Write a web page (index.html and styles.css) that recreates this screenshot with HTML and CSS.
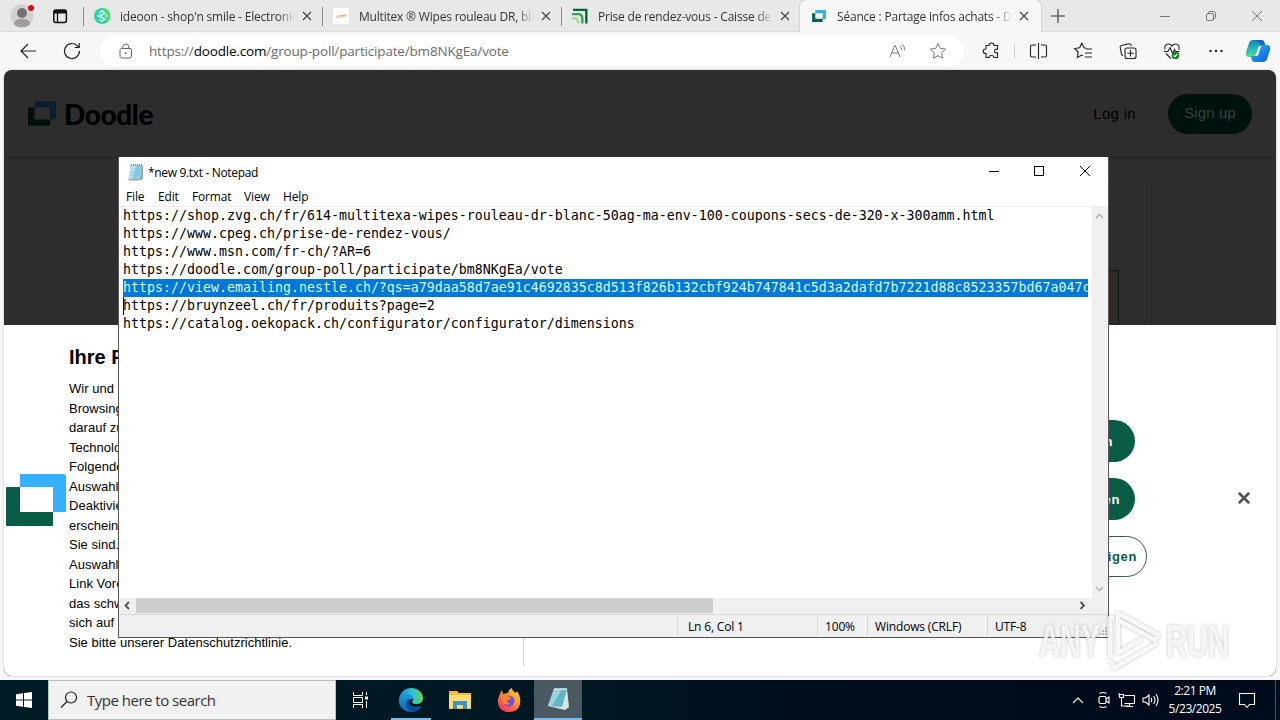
FILE: index.html
```html
<!DOCTYPE html>
<html lang="en">
<head>
  <meta charset="UTF-8">
  <meta name="viewport" content="width=device-width, initial-scale=1.0">
  <title>Desktop</title>
  <link rel="stylesheet" href="styles.css">
</head>
<body>
  <div class="desktop">
    <!-- Browser -->
    <div class="browser">
      <div class="tab-bar">
        <div class="profile">
          <svg width="24" height="28" viewBox="0 0 24 28"><circle cx="12" cy="14" r="11.5" fill="#d3d1d0"/><circle cx="12" cy="11" r="5" fill="#757371"/><ellipse cx="12" cy="21" rx="8" ry="4.3" fill="#a09e9c"/><circle cx="21" cy="6" r="3" fill="#d80c18"/></svg>
        </div>
        <div class="workspaces">
          <svg width="16" height="16" viewBox="0 0 16 16"><rect x="1.8" y="2" width="12.6" height="12.4" rx="2" fill="none" stroke="#111" stroke-width="1.5"/><path d="M2 2h12v3.5H2z" fill="#111"/><path d="M5.5 5v9" stroke="#111" stroke-width="1.3"/></svg>
        </div>
        <div class="tab">
          <svg class="favicon" width="16" height="16" viewBox="0 0 16 16"><circle cx="8" cy="8" r="8" fill="#26d5a4"/><path d="M8 0a8 8 0 0 1 5 14.500z" fill="#4bdc75"/><path d="M8 2.500L11 5.500 5 8l6 3-3 2.500L5 11M5 5.500l3-3M3 8h2M11 8h2.500" fill="none" stroke="#e2fff2" stroke-width="1.500" stroke-linejoin="round"/></svg>
          <span class="tab-title">ideoon - shop'n smile - Electronic</span>
          <svg class="close" width="10" height="10" viewBox="0 0 10 10"><path d="M1 1l8 8M9 1L1 9"/></svg>
        </div>
        <div class="tab">
          <svg class="favicon" width="16" height="16" viewBox="0 0 16 16"><path d="M0 0h16v16H0z" fill="#fffdfa"/><path d="M2 9l3-2 3 1 6-2-1 3-9 1z" fill="#f2cfae"/><path d="M7 8l6-1" stroke="#e8a878"/></svg>
          <span class="tab-title">Multitex ® Wipes rouleau DR, blanc</span>
          <svg class="close" width="10" height="10" viewBox="0 0 10 10"><path d="M1 1l8 8M9 1L1 9"/></svg>
        </div>
        <div class="tab">
          <svg class="favicon" width="16" height="16" viewBox="0 0 17 16"><g fill="none" stroke-width="2.500"><path d="M1 1.500h14.200V16" stroke="#08643f"/><path d="M0 6h6.500q4.500 0 4.500 5v5" stroke="#38a35d"/><path d="M0 10.500h3q3.500 0 3.500 5.500" stroke="#9be08e"/></g></svg>
          <span class="tab-title">Prise de rendez-vous - Caisse de p</span>
          <svg class="close" width="10" height="10" viewBox="0 0 10 10"><path d="M1 1l8 8M9 1L1 9"/></svg>
        </div>
        <div class="tab active">
          <svg class="favicon" width="14" height="12" viewBox="0 0 30 26"><path d="M7 0h23v20h-7V7H7z" fill="#36aee5"/><path d="M0 7h7v12h16v7H0z" fill="#0b6450"/></svg>
          <span class="tab-title">Séance : Partage infos achats - Do</span>
          <svg class="close" width="10" height="10" viewBox="0 0 10 10"><path d="M1 1l8 8M9 1L1 9"/></svg>
        </div>
        <svg class="new-tab" width="14" height="14" viewBox="0 0 14 14"><path d="M7 0v14M0 7h14" stroke="#333" stroke-width="1.1"/></svg>
        <div class="window-buttons">
          <svg width="46" height="32" viewBox="0 0 46 32"><path d="M18 16.500h10"/></svg>
          <svg width="46" height="32" viewBox="0 0 46 32"><rect x="18.500" y="13.500" width="7" height="7" rx="1.500"/><path d="M20.500 13.500v-1q0-1 1-1h4q2 0 2 2v4q0 1-1 1h-1"/></svg>
          <svg width="46" height="32" viewBox="0 0 46 32"><path d="M18 11l10 10M28 11L18 21"/></svg>
        </div>
      </div>

      <div class="toolbar">
        <svg class="nav" width="18" height="18" viewBox="0 0 18 18"><path d="M17 9H2M9 2L2 9l7 7"/></svg>
        <svg class="nav reload" width="18" height="18" viewBox="0 0 18 18"><path d="M16.500 9a7.500 7.500 0 1 1-2.300-5.400L16 5.400M16.200 1v4.500h-4.500"/></svg>
        <div class="address">
          <svg class="lock" width="14" height="16" viewBox="0 0 14 16"><rect x="1" y="5.500" width="11.500" height="9.500" rx="1.500" fill="none" stroke="#666"/><path d="M3.800 5.500V4a3 3 0 0 1 6 0v1.500" fill="none" stroke="#666"/><circle cx="6.800" cy="10.200" r="1" fill="#666"/></svg>
          <span class="url">https://<b>doodle.com</b>/group-poll/participate/bm8NKgEa/vote</span>
          <svg class="read" width="18" height="16" viewBox="0 0 18 16"><path d="M1 14L5.800 2.500h.5L11 14M2.700 10h6.800M11 3q2 1.500 1.500 4M13 1q3.500 3 2.300 6.500" fill="none" stroke="#777"/></svg>
          <svg class="star" width="18" height="18" viewBox="0 0 18 18"><path d="M9 1.500l2.300 4.900 5.200.7-3.800 3.700.9 5.400L9 13.600l-4.600 2.600.9-5.400L1.500 7.100l5.200-.7z" fill="none" stroke="#777"/></svg>
        </div>
        <div class="tools">
          <svg width="46" height="20" viewBox="0 0 46 20"><path d="M18 4.500h3q0-2.500 2.500-2.500T26 4.500h3.500v3.700q-3-.3-3 1.800t3 1.800v4.700H26q0-2-2.500-2T21 16.500h-3v-4q-2.800 0-2.800-2.300T18 8z"/></svg>
          <i></i>
          <svg width="47" height="20" viewBox="0 0 47 20"><path d="M21 4h-4q-1.500 0-1.500 1.500v9q0 1.500 1.500 1.500h4M26 4h4q1.500 0 1.500 1.500v9q0 1.500-1.500 1.500h-4M23.500 2v16"/></svg>
          <svg width="44" height="20" viewBox="0 0 44 20"><path d="M24.500 7.200l-2.500-.5-2.200-4.400-2.200 4.400-5 .8 3.600 3.500-.9 5.500 4.500-2.400 1.200.7M24 8h6M23 12h7M23 16h7"/></svg>
          <svg width="44" height="20" viewBox="0 0 44 20"><rect x="19" y="7" width="11" height="10.500" rx="2"/><path d="M24.500 9v6.500M21.300 12.300h6.500M17 14.500q-1 0-1.500-1.500l-1.300-6.500q-.3-1.500 1.300-2l7.500-1.700q1.500-.3 2 1.200l.3 1"/></svg>
          <svg width="44" height="20" viewBox="0 0 44 20"><path d="M15 8.500q-1-5.500 3.500-5.500 2.500 0 3.500 2 1-2 3.500-2 4.500 0 3.500 6M14 10.500h4l2-4 2.500 6 2-4 1 2h4M16 12.500l5 5"/><circle cx="25.500" cy="14.500" r="3.800" fill="#178126" stroke="none"/><path d="M23.800 14.500l1.200 1.200 2.300-2.500" stroke="#fff"/></svg>
          <svg width="44" height="20" viewBox="0 0 44 20"><g fill="#222" stroke="none"><circle cx="16.500" cy="10" r="1.200"/><circle cx="22" cy="10" r="1.200"/><circle cx="27.500" cy="10" r="1.200"/></g></svg>
        </div>
        <svg class="copilot" width="26" height="24" viewBox="0 0 26 24">
          <defs>
            <linearGradient id="cp1" x2="0" y2="1"><stop stop-color="#1687c5"/><stop offset=".55" stop-color="#27b9bb"/><stop offset="1" stop-color="#60db8b"/></linearGradient>
            <linearGradient id="cp2" x2="1" y2="1"><stop stop-color="#25b7f5"/><stop offset="1" stop-color="#1457df"/></linearGradient>
          </defs>
          <path d="M8 1h8q3 0 3.500 3l.5 3h-4q-2 0-3 3l-1.500 5q-1 3-4 3H4q-4 0-3-5l3-9q1-3 4-3z" fill="url(#cp1)"/>
          <path d="M18 23h-8q-3 0-3.500-3L6 17h4q2 0 3-3l1.500-5q1-3 4-3H22q4 0 3 5l-3 9q-1 3-4 3z" fill="url(#cp2)"/>
          <path d="M15 7h2q-1.500 1-2 3l-1.200 4.500q-.8 2.500-2.800 2.500H9.500q1.500-1 2-3L13 9q.5-2 2-2z" fill="#f5fbff"/>
          <path d="M8 1h8q3 0 3.500 3l.5 2h-4q-2-4-8-5z" fill="#1763cf"/>
        </svg>
      </div>

      <div class="page">
        <div class="page-header">
          <svg class="doodle-mark" width="28" height="25" viewBox="0 0 60 52"><path d="M14 0h46v38H47V13H14z" fill="#0a1e2c"/><path d="M0 13h14v26h33v13H0z" fill="#000f0b"/></svg>
          <span class="wordmark">Doodle</span>
          <span class="login">Log in</span>
          <span class="signup">Sign up</span>
        </div>
        <div class="poll"><div class="poll-slot"></div></div>

        <!-- Cookie consent -->
        <div class="consent">
          <svg class="consent-logo" width="60" height="52" viewBox="0 0 60 52"><path d="M14 0h44q2 0 2 2v36H47V13H14z" fill="#35b1ff"/><path d="M0 14q0-1 1-1h13v25h33v13q0 1-1 1H1q-1 0-1-1z" fill="#095c46"/></svg>
          <div class="consent-text">
            <h2>Ihre P</h2>
            <p>Wir und<br>Browsing<br>darauf zu<br>Technolo<br>Folgende<br>Auswahl<br>Deaktivie<br>erschein<br>Sie sind.<br>Auswahl<br>Link Vore<br>das schw<br>sich auf<br>Sie bitte unserer Datenschutzrichtlinie.</p>
          </div>
          <div class="consent-actions">
            <button class="solid first">Akzeptieren</button>
            <button class="solid">Ablehnen</button>
            <button class="outline">Zwecke anzeigen</button>
          </div>
          <svg class="dismiss" width="14" height="14" viewBox="0 0 14 14"><path d="M2.500 2.500l9 9M11.500 2.500l-9 9" stroke="#505050" stroke-width="2.500" stroke-linecap="round"/></svg>
        </div>
      </div>
    </div>

    <!-- Notepad -->
    <div class="notepad">
      <div class="np-title">
        <svg width="18" height="18" viewBox="0 0 18 18"><path d="M4 2.500h12V16l-3 1.500H1.500z" fill="#9fa9ab"/><path d="M3.500 2h11.500l-1.500 14H1.500z" fill="#8ecce0"/><path d="M3.500 2h6L5 16H1.500z" fill="#b9e4ef"/><path d="M4 6h10M3.700 9H14M3.300 12h10" stroke="#62a7c4" stroke-width=".4"/><path d="M4 2h12" stroke="#68777d" stroke-width="1.500" stroke-dasharray="1 1"/></svg>
        <span>*new 9.txt - Notepad</span>
        <div class="np-buttons">
          <svg width="45" height="30" viewBox="0 0 45 30"><path d="M17 14.500h10"/></svg>
          <svg width="46" height="30" viewBox="0 0 46 30"><rect x="17.500" y="9.500" width="9" height="9"/></svg>
          <svg width="45" height="30" viewBox="0 0 45 30"><path d="M17 9l10 10M27 9L17 19"/></svg>
        </div>
      </div>
      <div class="np-menu"><span class="m1">File</span><span class="m2">Edit</span><span class="m3">Format</span><span class="m4">View</span><span class="m5">Help</span></div>
      <div class="np-body">
        <div class="np-text">
          <div>https://shop.zvg.ch/fr/614-multitexa-wipes-rouleau-dr-blanc-50ag-ma-env-100-coupons-secs-de-320-x-300amm.html</div>
          <div>https://www.cpeg.ch/prise-de-rendez-vous/</div>
          <div>https://www.msn.com/fr-ch/?AR=6</div>
          <div>https://doodle.com/group-poll/participate/bm8NKgEa/vote</div>
          <div class="selected">https://view.emailing.nestle.ch/?qs=a79daa58d7ae91c4692835c8d513f826b132cbf924b747841c5d3a2dafd7b7221d88c8523357bd67a047c</div>
          <div class="caret">https://bruynzeel.ch/fr/produits?page=2</div>
          <div>https://catalog.oekopack.ch/configurator/configurator/dimensions</div>
        </div>
        <div class="v-scroll">
          <svg width="9" height="6" viewBox="0 0 9 6"><path d="M1 5l3.500-3.500L8 5"/></svg>
          <svg width="9" height="6" viewBox="0 0 9 6"><path d="M1 1l3.500 3.500L8 1"/></svg>
        </div>
      </div>
      <div class="h-scroll">
        <svg width="17" height="16" viewBox="0 0 17 16"><path d="M10 4L6.500 7.500 10 11"/></svg>
        <div class="thumb"></div>
        <svg width="17" height="16" viewBox="0 0 17 16"><path d="M5.500 4L9 7.500 5.500 11"/></svg>
      </div>
      <div class="np-status">
        <span class="pos">Ln 6, Col 1</span><span class="zoom">100%</span><span class="eol">Windows (CRLF)</span><span class="enc">UTF-8</span>
        <svg class="grip" width="10" height="10" viewBox="0 0 10 10"><path d="M7 1h2v2H7zM4 4h2v2H4zM7 4h2v2H7zM1 7h2v2H1zM4 7h2v2H4zM7 7h2v2H7z" fill="#bbb"/></svg>
      </div>
    </div>

    <div class="watermark">
      <span>ANY</span>
      <svg width="58" height="64" viewBox="0 0 58 64"><path d="M5 50V10h4M13 31V5l40 22-3 5L13 12M13 25v20l24-14M11 59l41-24M8 53v6l4 1" fill="none" stroke="#fff" stroke-opacity=".85" stroke-width="4.500" stroke-linejoin="round"/></svg>
      <span>RUN</span>
    </div>

    <!-- Taskbar -->
    <div class="taskbar">
      <div class="start"><svg width="16" height="16" viewBox="0 0 16 16"><path d="M0 2.300L7 1.200v6.300H0zM8 1l8-1v7.500H8zM0 8.500h7v6.300l-7-1zM8 8.500h8V16l-8-1.100z" fill="#fff"/></svg></div>
      <div class="search">
        <svg width="18" height="18" viewBox="0 0 18 18"><circle cx="11" cy="6.500" r="5.500" fill="none" stroke="#222" stroke-width="1.200"/><path d="M7 10.500L1 16.500" stroke="#222" stroke-width="1.300"/></svg>
        <span>Type here to search</span>
      </div>
      <div class="task view"><svg width="18" height="18" viewBox="0 0 18 18"><path d="M2.500 1v3.500h9V1M2.500 17v-3.500h9V17M2.500 6.500h9v5h-9zM15.500 1v3M15.500 10v7" fill="none" stroke="#fff"/><path d="M14 5.500h3v3h-3z" fill="#fff"/></svg></div>
      <div class="task edge">
        <svg width="26" height="26" viewBox="0 0 26 26">
          <defs>
            <linearGradient id="eg1" x2="1"><stop stop-color="#1c83d1"/><stop offset=".5" stop-color="#2bbfd8"/><stop offset="1" stop-color="#64d65b"/></linearGradient>
            <linearGradient id="eg2" x2="0" y2="1"><stop stop-color="#1b9bdc"/><stop offset="1" stop-color="#1463b5"/></linearGradient>
          </defs>
          <path d="M1 12C2 5 7 1 13 1c8 0 12 6 12 10 0 5-4 6-7 6-3 0-5-1-3-4 1-2-1-5-5-5-4 0-8 2-9 4z" fill="url(#eg1)"/>
          <path d="M1 12c1-3 5-5 9-5 3 0 6 2 5 5-7 0-6 11 8 7-2 4-6 6-10 6C6 25 0 20 1 12z" fill="url(#eg2)"/>
          <path d="M10 12c-3 4-2 10 4 13 4 0 7-2 9-6-6 4-14 0-11-7z" fill="#0c4d92"/>
        </svg>
      </div>
      <div class="task"><svg width="22" height="20" viewBox="0 0 22 20"><path d="M0 1h8l2 2h12v16H0z" fill="#f6bd35"/><path d="M0 5h22v13H0z" fill="#ffdc70"/><path d="M4 19v-8h14v8h-4v-4H8v4z" fill="#3c91ce"/></svg></div>
      <div class="task">
        <svg width="24" height="25" viewBox="0 0 24 25">
          <defs><linearGradient id="ff" x1="1" x2=".2" y2="1"><stop stop-color="#ffe33d"/><stop offset=".45" stop-color="#ff9827"/><stop offset="1" stop-color="#f12b67"/></linearGradient></defs>
          <path d="M3 6q1-3 2-4 0 3 2 4 2-1 4-1 1-4 4-5 0 3 4 5l1-2c6 9 4 21-8 21C2 24-2 15 3 6z" fill="url(#ff)"/><circle cx="12" cy="13" r="5.500" fill="#7450d8"/><path d="M7 8q4-1 7 2-1 2-4 2 0 3 3 4-5 2-8-3z" fill="#ff8331"/>
        </svg>
      </div>
      <div class="task open"><svg width="24" height="24" viewBox="0 0 24 24"><path d="M8 2h13l2 18-4 3-17-4z" fill="#d8e5e3"/><path d="M8 2h13l-5 18-14-1z" fill="#65b4c3"/><path d="M8 2h8L6 19H2z" fill="#99d3dc"/><path d="M8 2h13" stroke="#d7eef0" stroke-width="1.500"/></svg></div>
      <div class="tray">
        <svg class="up" width="12" height="8" viewBox="0 0 12 8"><path d="M1 7l5-5 5 5"/></svg>
        <svg class="cam" width="14" height="18" viewBox="0 0 14 18"><rect x="2" y="5.500" width="7" height="7" rx="1.500"/><path d="M9 8l3-2v6l-3-2M2.500 2.500q3.500-2 7 0M2.500 15.500q3.500 2 7 0"/></svg>
        <svg class="net" width="18" height="16" viewBox="0 0 18 16"><path d="M6.500 3.500h10v8h-10M1.500 2.500h4v3h-4zM3.500 5.500V14h7M11.500 12v2.500M8 14.500h7M1 2.500V1"/></svg>
        <svg class="vol" width="18" height="14" viewBox="0 0 18 14"><path d="M1 5h2.500L7 2v10L3.500 9H1zM9 4.800q1.500 2.200 0 4.400M11.500 3q3 4 0 8M14 1q4 6 0 12"/></svg>
        <div class="clock"><span>2:21 PM</span><span>5/23/2025</span></div>
        <svg class="note" width="18" height="18" viewBox="0 0 18 18"><path d="M1.500 2.500h15v11h-5l-2.500 3-2.500-3h-5z"/></svg>
        <i></i>
      </div>
    </div>
  </div>
</body>
</html>
```
FILE: styles.css
```css
* {
  box-sizing: border-box;
}

body {
  margin: 0;
  font-family: "Open Sans", "Noto Sans", sans-serif;
  font-size: 12px;
  color: #000;
}

svg {
  display: block;
  flex: none;
}

.desktop {
  position: relative;
  width: 1280px;
  height: 720px;
  overflow: hidden;
  display: flex;
  flex-direction: column;
}

/* Browser */
.browser {
  height: 680px;
  background: #f7f7f7;
}

.tab-bar {
  display: flex;
  height: 32px;
  background: #e8e8e8;
  border-bottom: 1px solid #dcdcdc;
}

.profile {
  padding: 2px 0 0 10px;
  width: 52px;
}

.workspaces {
  padding-top: 8px;
  width: 31px;
}

.tab {
  display: flex;
  flex: none;
  align-items: center;
  width: 239px;
  height: 32px;
  padding-left: 11px;
  background: linear-gradient(#8a8a8a, #8a8a8a) 0 7px / 1px 19px no-repeat;
}

.tab-title {
  width: 175px;
  margin-left: 10px;
  overflow: hidden;
  white-space: nowrap;
  color: #333;
  letter-spacing: -0.2px;
  -webkit-mask-image: linear-gradient(90deg, #000 90%, transparent);
  mask-image: linear-gradient(90deg, #000 90%, transparent);
}

.close {
  margin-left: 7px;
  stroke: #444;
  stroke-width: 1.2;
}

.tab.active {
  width: 241px;
  padding-left: 12px;
  background: #f7f7f7;
  border-radius: 6px 6px 0 0;
  box-shadow: 0 0 2px #aaa;
  clip-path: inset(0 -3px 0 -3px);
}

.active .tab-title {
  margin-left: 11px;
}

.new-tab {
  margin: 9px 0 0 10px;
}

.window-buttons {
  display: flex;
  margin-left: auto;
}

.window-buttons svg {
  fill: none;
  stroke: #777;
}

.toolbar {
  display: flex;
  align-items: center;
  height: 38px;
  padding-left: 19px;
}

.nav {
  fill: none;
  stroke: #222;
  stroke-width: 1.2;
}

.reload {
  margin-left: 26px;
}

.address {
  display: flex;
  align-items: center;
  width: 864px;
  height: 30px;
  margin-left: 19px;
  padding-left: 19px;
  background: #fff;
  border-radius: 15px;
}

.url {
  width: 738px;
  margin-left: 16px;
  font-size: 13.5px;
  letter-spacing: -0.175px;
  color: #6b6b6b;
}

.url b {
  font-weight: 400;
  color: #000;
}

.read {
  margin-left: 2px;
}

.star {
  margin-left: 22px;
}

.tools {
  display: flex;
  align-items: center;
  margin-left: 4px;
}

.tools svg {
  fill: none;
  stroke: #222;
  stroke-width: 1.1;
}

.tools i {
  width: 1px;
  height: 16px;
  background: #d0d0d0;
}

.copilot {
  margin-left: 7px;
}

/* Web page */
.page {
  display: flex;
  flex-direction: column;
  width: 1272px;
  height: 606px;
  margin-left: 4px;
  overflow: hidden;
  background: #2d2d2d;
  border-radius: 8px;
  box-shadow: 0 0 2px #aaa;
}

.page-header {
  display: flex;
  align-items: center;
  height: 88px;
  padding: 0 24px;
  border-bottom: 1px solid #242424;
  font-family: "Liberation Sans", Arial, sans-serif;
}

.wordmark {
  margin-left: 8px;
  font-family: Lato, sans-serif;
  font-size: 28px;
  font-weight: 900;
  letter-spacing: -0.4px;
}

.login {
  margin-left: auto;
  font-size: 15px;
  letter-spacing: 0.3px;
}

.signup {
  width: 84px;
  height: 40px;
  margin-left: 32px;
  border-radius: 20px;
  background: #00120d;
  color: #35433f;
  font-size: 15px;
  line-height: 38px;
  letter-spacing: 0.1px;
  text-align: center;
}

.poll {
  width: 1027px;
  height: 143px;
  margin: 24px 0 0 121px;
  padding: 87px 32px 0;
  border: 1px solid #262626;
  border-bottom: 0;
  flex: none;
}

.poll-slot {
  height: 55px;
  border: 1px solid #111;
  border-bottom: 0;
  border-radius: 3px 3px 0 0;
  background: #302925;
}

.consent {
  display: flex;
  flex: none;
  height: 351px;
  background: #fff;
  font-family: "Liberation Sans", Arial, sans-serif;
}

.consent-logo {
  margin: 149px 0 0 2px;
}

.consent-text {
  width: 458px;
  height: 341px;
  padding: 20px 0 0 3px;
  border-right: 1px solid #d8d8d8;
  white-space: nowrap;
}

.consent-text h2 {
  margin: 0;
  font-size: 20px;
  line-height: 24px;
}

.consent-text p {
  margin: 10px 0 0;
  font-size: 13px;
  line-height: 19.5px;
  letter-spacing: 0.03px;
}

.consent-actions {
  display: flex;
  flex-direction: column;
  width: 623px;
  padding-top: 95px;
}

.consent-actions button {
  width: 200px;
  height: 42px;
  margin: 0 0 16px auto;
  padding: 0 15px 0 0;
  border: 0;
  border-radius: 21px;
  background: #095c46;
  color: #fff;
  font: bold 13px "Liberation Sans", Arial, sans-serif;
  letter-spacing: 0.6px;
  text-align: right;
}

.consent-actions .solid {
  margin-right: 12px;
}

.consent-actions .first {
  padding-right: 22px;
}

.consent-actions .outline {
  height: 41px;
  padding-right: 9px;
  border: 1px solid #315f52;
  background: #fff;
  color: #095c46;
}

.dismiss {
  margin: 166px 0 0 90px;
}

/* Notepad window */
.notepad {
  position: absolute;
  left: 118px;
  top: 157px;
  width: 991px;
  height: 481px;
  border: 1px solid #555;
  border-top: 0;
  background: #fff;
  display: flex;
  flex-direction: column;
}

.np-title {
  display: flex;
  align-items: center;
  height: 30px;
  padding-left: 8px;
}

.np-title span {
  margin-left: 3px;
  letter-spacing: -0.33px;
}

.np-buttons {
  display: flex;
  margin-left: auto;
}

.np-buttons svg {
  fill: none;
  stroke: #000;
}

.np-menu {
  display: flex;
  height: 20px;
  padding-left: 7px;
  border-bottom: 1px solid #eee;
  line-height: 20px;
  letter-spacing: -0.15px;
}

.m1 { width: 32px; }
.m2 { width: 34px; }
.m3 { width: 52px; }
.m4 { width: 39px; }

.np-body {
  display: flex;
  height: 391px;
}

.np-text {
  width: 969px;
  margin-right: 4px;
  padding-left: 4px;
  overflow: hidden;
  white-space: nowrap;
  font-family: "DejaVu Sans Mono", monospace;
  font-size: 13.29px;
  line-height: 18px;
}

.np-text div {
  height: 18px;
}

.np-text .selected {
  overflow: hidden;
  background: #0078d7;
  color: #d7f8ff;
}

.np-text .caret {
  box-shadow: inset 1px 0 #000;
}

.v-scroll {
  display: flex;
  flex: 1;
  flex-direction: column;
  align-items: center;
  justify-content: space-between;
  padding: 6px 1px 6px 0;
  background: #f0f0f0;
}

.v-scroll svg {
  fill: none;
  stroke: #b0b0b0;
  stroke-width: 1.5;
}

.h-scroll {
  display: flex;
  height: 16px;
  background: #f0f0f0;
}

.h-scroll svg {
  fill: none;
  stroke: #505050;
  stroke-width: 1.8;
}

.thumb {
  width: 577px;
  height: 15px;
  margin-right: 362px;
  background: #cdcdcd;
}

.np-status {
  display: flex;
  height: 23px;
  border-top: 1px solid #d7d7d7;
  background: #f0f0f0;
}

.np-status span {
  height: 20px;
  margin-top: 1px;
  padding-left: 7px;
  border-left: 1px solid #d7d7d7;
  white-space: nowrap;
  line-height: 21px;
  letter-spacing: -0.17px;
}

.np-status .pos {
  width: 140px;
  margin-left: 558px;
  padding-left: 10px;
}

.np-status .zoom { width: 50px; }
.np-status .eol { width: 120px; }

.grip {
  margin: 11px 0 0 auto;
}

.watermark {
  position: absolute;
  left: 1039px;
  top: 608px;
  display: flex;
  align-items: center;
  height: 64px;
  color: rgba(255, 255, 255, 0.8);
  font-family: "Liberation Sans", Arial, sans-serif;
  font-size: 47px;
  font-weight: 700;
  filter: drop-shadow(0 0 1.5px rgba(0, 0, 0, 0.3));
}

.watermark span {
  width: 66px;
  transform: scaleX(0.62);
  transform-origin: 0 50%;
}

.watermark svg {
  margin-right: 3px;
}

/* Taskbar */
.taskbar {
  display: flex;
  height: 40px;
  background: linear-gradient(90deg, #001b24, #001722 45%, #000d1d 65%, #000b1b);
}

.start {
  display: flex;
  align-items: center;
  justify-content: center;
  width: 48px;
}

.search {
  display: flex;
  align-items: center;
  width: 288px;
  padding-left: 11px;
  border: 1px solid #b8bdbf;
  background: #f1f1f1;
  color: #333;
  font-size: 15px;
}

.search span {
  margin-left: 9px;
  letter-spacing: -0.5px;
}

.task {
  display: flex;
  align-items: center;
  justify-content: center;
  width: 49px;
}

.task.view {
  width: 50px;
  padding-right: 3px;
}

.task.edge {
  background: linear-gradient(#76b9ed, #76b9ed) 50% 100% / 40px 2px no-repeat;
}

.task.open {
  width: 48px;
  margin-left: 1px;
  background: #4a5962;
  border-bottom: 2px solid #76b9ed;
}

.tray {
  display: flex;
  align-items: center;
  margin-left: auto;
  color: #fff;
}

.tray svg {
  fill: none;
  stroke: #fff;
  stroke-width: 1.1;
}

.cam { margin-left: 13px; }
.net { margin-left: 7px; }
.vol { margin-left: 6px; }

.clock {
  display: flex;
  flex-direction: column;
  align-items: center;
  width: 70px;
  line-height: 18px;
  letter-spacing: -0.45px;
}

.note {
  margin-left: 8px;
}

.tray i {
  width: 1px;
  height: 40px;
  margin: 0 4px 0 19px;
  background: #45505b;
}
```
